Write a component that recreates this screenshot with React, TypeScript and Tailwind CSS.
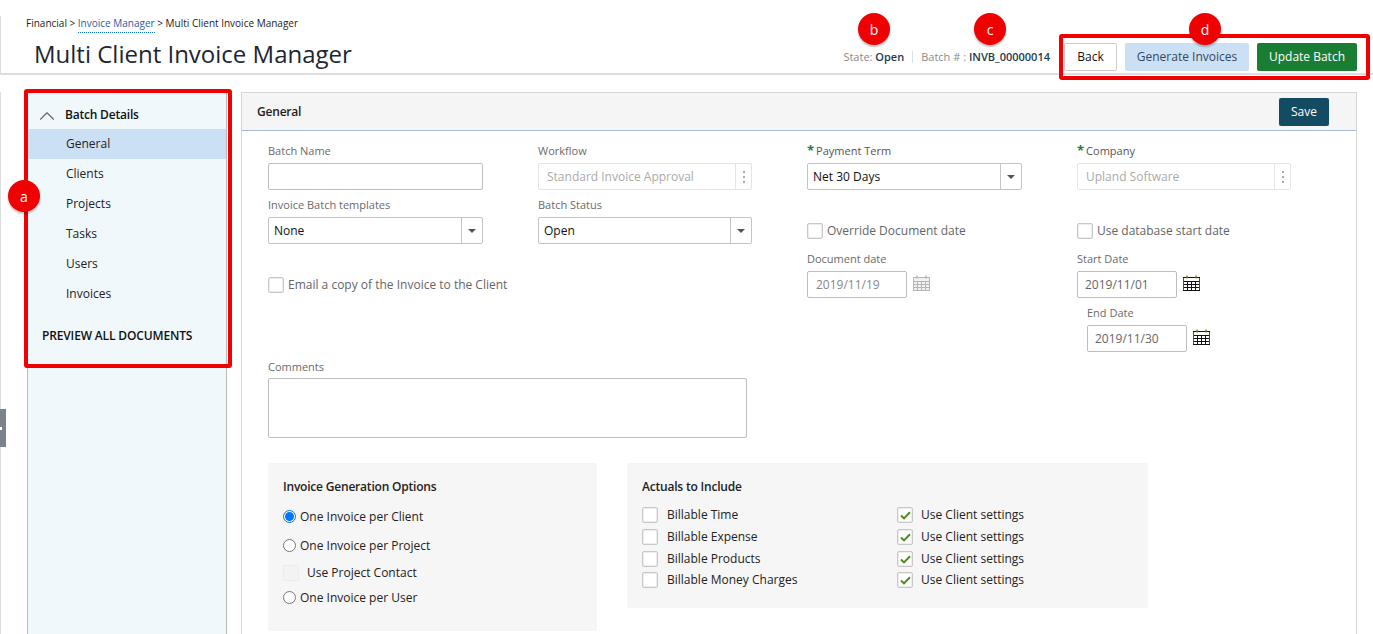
import { ChevronUp } from "lucide-react";
import type { ReactNode } from "react";

const NAV = ["General", "Clients", "Projects", "Tasks", "Users", "Invoices"];
const ACTUALS = ["Billable Time", "Billable Expense", "Billable Products", "Billable Money Charges"];
const ACTUAL_ROWS = ["h-[22px]", "h-[22px]", "h-[22px]", "h-[20px]"];

function Caret() {
  return <span className="h-0 w-0 border-x-[4px] border-t-[4px] border-x-transparent border-t-[#555]" />;
}

function Label({ children, required }: { children: ReactNode; required?: boolean }) {
  return (
    <div className={`flex h-[12px] items-center gap-[2px] text-[11px] leading-none ${required ? "font-medium text-[#555]" : "text-[#6b6b6b]"}`}>
      {required && <span className="text-[13px] font-bold text-[#1a7f37]">*</span>}
      {children}
    </div>
  );
}

function TextBox({ value, className = "" }: { value?: string; className?: string }) {
  return (
    <div className={`mt-[7px] flex h-[27px] items-center rounded-[2px] border border-[#bdbdbd] bg-white text-[#666] ${className}`}>
      {value}
    </div>
  );
}

function Select({ value }: { value: string }) {
  return (
    <div className="mt-[7px] flex h-[27px] w-full items-center rounded-[2px] border border-[#c4c4c4] bg-white text-[#111]">
      <span className="flex-1 pl-[5px]">{value}</span>
      <span className="flex h-full w-[21px] items-center justify-center border-l border-[#c4c4c4]">
        <Caret />
      </span>
    </div>
  );
}

function Lookup({ value }: { value: string }) {
  return (
    <div className="mt-[7px] flex h-[27px] w-full items-center rounded-[2px] border border-[#e4e4e4] bg-white text-[#aaa]">
      <span className="flex-1 pl-[8px]">{value}</span>
      <span className="flex h-full w-[16px] flex-col items-center justify-center gap-[3px] border-l border-[#e4e4e4]">
        <i className="h-[2px] w-[2px] bg-[#aaa]" />
        <i className="h-[2px] w-[2px] bg-[#aaa]" />
        <i className="h-[2px] w-[2px] bg-[#aaa]" />
      </span>
    </div>
  );
}

function Box({ checked, disabled }: { checked?: boolean; disabled?: boolean }) {
  return (
    <span
      className={`flex h-[16px] w-[16px] shrink-0 items-center justify-center rounded-[2px] border ${
        disabled ? "border-[#ececec] bg-[#f3f3f3]" : "border-[#c8c8c8] bg-white shadow-[inset_0_0_0_1px_#ededed]"
      } ${checked ? "bg-[#f3f3f3]" : ""}`}
    >
      {checked && (
        <svg width="11" height="9" viewBox="0 0 11 9">
          <path d="M1 4.6 4 7.4 10 1.2" fill="none" stroke="#4e8a1e" strokeWidth="2" />
        </svg>
      )}
    </span>
  );
}

function Radio({ checked }: { checked?: boolean }) {
  return (
    <span
      className={`-mt-px flex h-[13px] w-[13px] shrink-0 items-center justify-center rounded-full border bg-white ${
        checked ? "border-[#0075ff]" : "border-[#767676]"
      }`}
    >
      {checked && <i className="h-[9px] w-[9px] rounded-full bg-[#0075ff]" />}
    </span>
  );
}

function Calendar({ muted }: { muted?: boolean }) {
  const c = muted ? "#b5b5b5" : "#111";
  return (
    <svg width="17" height="16" viewBox="0 0 17 16" className="ml-[6px] mt-[11px] shrink-0">
      <rect x="0.5" y="2.5" width="16" height="13" fill={muted ? "#f2f2f2" : "#fff"} stroke={c} />
      <path d="M0.5 2.5h16" stroke={c} />
      <path d="M4 0.5v3M13 0.5v3" stroke={muted ? c : "#8a6a20"} strokeWidth="1.4" />
      <path d="M0.5 6.5h16M0.5 9.5h16M0.5 12.5h16M4.5 6.5v9M8.5 6.5v9M12.5 6.5v9" stroke={c} strokeWidth="1" />
      {!muted && <path d="M0.5 3v12" stroke="#b5741f" strokeWidth="0.6" />}
      {!muted && <path d="M16.5 3v12" stroke="#2f7fd0" strokeWidth="0.6" />}
    </svg>
  );
}

function Badge({ letter, className }: { letter: string; className: string }) {
  return (
    <span
      className={`absolute flex h-[32px] w-[32px] items-center justify-center rounded-full bg-[#f00000] text-[14px] text-white shadow-[0_2px_2px_rgba(0,0,0,0.25)] ${className}`}
    >
      {letter}
    </span>
  );
}

export default function App() {
  return (
    <div className="relative h-[634px] w-[1373px] overflow-hidden bg-white font-['Open_Sans',sans-serif] text-[12px] text-[#333]">
      <header className="mt-[16px] flex h-[59px] items-start justify-between border-b-2 border-l border-[#dedede] pr-[16px]">
        <div>
          <div className="ml-[25px] text-[10px] leading-[14px] text-[#222]">
            Financial &gt;{" "}
            <span className="border-b border-dotted border-[#0a6ecb] pb-[2px] text-[#2c5d9e]">Invoice Manager</span> &gt; Multi Client
            Invoice Manager
          </div>
          <h1 className="ml-[33px] mt-[7px] text-[24px] leading-[34px] text-[#1c2733]">Multi Client Invoice Manager</h1>
        </div>
        <div className="mt-[27px] flex items-center">
          <div className="flex items-center text-[11px] text-[#8a8a8a]">
            State:&nbsp;<b className="font-semibold text-[#1d3a4d]">Open</b>
            <i className="mx-[8px] h-[12px] w-px bg-[#d8e2ea]" />
            Batch # :&nbsp;<b className="font-semibold text-[#1d3a4d]">INVB_00000014</b>
          </div>
          <button className="ml-[14px] h-[28px] w-[53px] rounded-[2px] border border-[#ccc] bg-white text-[#111]">Back</button>
          <button className="ml-[8px] h-[28px] w-[124px] rounded-[2px] bg-[#cce0f5] text-[#34495e]">Generate Invoices</button>
          <button className="ml-[8px] h-[28px] w-[100px] rounded-[2px] bg-[#1a7d34] text-white">Update Batch</button>
        </div>
      </header>

      <div className="mt-[17px] flex h-[542px] items-stretch border-l border-[#dedede]">
        <aside className="ml-[26px] w-[200px] border-x border-[#bcbcbc] bg-[#f0f8fc] pt-[8px]">
          <div className="flex h-[29px] items-center text-[#111]">
            <ChevronUp className="ml-[6px] mt-[2px] text-[#666]" size={26} strokeWidth={1} />
            <span className="ml-[5px] font-semibold tracking-[-0.2px]">Batch Details</span>
          </div>
          {NAV.map((n, i) => (
            <div key={n} className={`flex h-[30px] items-center pl-[38px] text-[#222] ${i === 0 ? "bg-[#cce0f5]" : ""}`}>
              {n}
            </div>
          ))}
          <div className="ml-[14px] mt-[18px] font-semibold tracking-[-0.15px] text-[#111]">PREVIEW ALL DOCUMENTS</div>
        </aside>

        <main className="ml-[14px] h-full w-[1116px] border border-b-0 border-[#d6d6d6]">
          <div className="flex h-[38px] items-center justify-between border-b border-[#a9bcd5] bg-[#f5f5f5] pl-[15px] pr-[27px]">
            <span className="font-semibold tracking-[-0.2px] text-[#222]">General</span>
            <button className="h-[28px] w-[50px] rounded-[2px] bg-[#134b63] text-white">Save</button>
          </div>

          <div className="pl-[26px] pt-[13px]">
            <div className="grid grid-cols-[270px_269px_270px_216px] grid-rows-[54px_54px_54px_54px]">
              <div className="w-[215px]">
                <Label>Batch Name</Label>
                <TextBox />
              </div>
              <div className="w-[214px]">
                <Label>Workflow</Label>
                <Lookup value="Standard Invoice Approval" />
              </div>
              <div className="w-[215px]">
                <Label required>Payment Term</Label>
                <Select value="Net 30 Days" />
              </div>
              <div className="w-[214px]">
                <Label required>Company</Label>
                <Lookup value="Upland Software" />
              </div>

              <div className="w-[215px]">
                <Label>Invoice Batch templates</Label>
                <Select value="None" />
              </div>
              <div className="w-[214px]">
                <Label>Batch Status</Label>
                <Select value="Open" />
              </div>
              <div className="mt-[25px] flex h-[16px] items-center gap-[4px] text-[#666]">
                <Box />
                Override Document date
              </div>
              <div className="mt-[25px] flex h-[16px] items-center gap-[4px] text-[#666]">
                <Box />
                Use database start date
              </div>

              <div className="col-span-2 mt-[25px] flex h-[16px] items-center gap-[4px] text-[#666]">
                <Box />
                Email a copy of the Invoice to the Client
              </div>
              <div>
                <Label>Document date</Label>
                <div className="flex items-start">
                  <TextBox value="2019/11/19" className="w-[100px] px-[8px] text-[#888]" />
                  <Calendar muted />
                </div>
              </div>
              <div>
                <Label>Start Date</Label>
                <div className="flex items-start">
                  <TextBox value="2019/11/01" className="w-[100px] px-[7px]" />
                  <Calendar />
                </div>
              </div>

              <div className="col-start-4 ml-[10px]">
                <Label>End Date</Label>
                <div className="flex items-start">
                  <TextBox value="2019/11/30" className="w-[100px] px-[7px]" />
                  <Calendar />
                </div>
              </div>
            </div>

            <Label>Comments</Label>
            <div className="mt-[6px] h-[60px] w-[479px] rounded-[2px] border border-[#bdbdbd] bg-white" />

            <div className="mt-[25px] flex items-start">
              <section className="h-[168px] w-[329px] rounded-[2px] bg-[#f6f6f6] pl-[15px] pt-[16px] text-[#222]">
                <h3 className="font-semibold leading-[16px] tracking-[-0.2px]">Invoice Generation Options</h3>
                <div className="mt-[14px] flex h-[16px] items-center gap-[4px]">
                  <Radio checked />
                  One Invoice per Client
                </div>
                <div className="mt-[13px] flex h-[16px] items-center gap-[4px]">
                  <Radio />
                  One Invoice per Project
                </div>
                <div className="mt-[11px] flex h-[16px] items-center gap-[8px]">
                  <Box disabled />
                  Use Project Contact
                </div>
                <div className="mt-[9px] flex h-[16px] items-center gap-[4px]">
                  <Radio />
                  One Invoice per User
                </div>
              </section>

              <section className="ml-[30px] h-[145px] w-[521px] rounded-[2px] bg-[#f6f6f6] pl-[15px] pt-[16px] text-[#222]">
                <h3 className="font-semibold leading-[16px] tracking-[-0.2px]">Actuals to Include</h3>
                <div className="mt-[9px]">
                  {ACTUALS.map((a, i) => (
                    <div key={a} className={`flex items-center ${ACTUAL_ROWS[i]}`}>
                      <div className="flex w-[255px] items-center gap-[9px]">
                        <Box />
                        {a}
                      </div>
                      <div className="flex items-center gap-[8px]">
                        <Box checked />
                        Use Client settings
                      </div>
                    </div>
                  ))}
                </div>
              </section>
            </div>
          </div>
        </main>
      </div>

      {/* collapse handle */}
      <div className="absolute left-0 top-[409px] flex h-[38px] w-[6px] items-center bg-[#7d838b]">
        <i className="h-[3px] w-[2px] bg-white" />
      </div>

      {/* callouts */}
      <div className="absolute left-[24px] top-[89px] h-[279px] w-[208px] rounded-[3px] border-[4px] border-[#f00000]" />
      <div className="absolute left-[1059px] top-[34px] h-[46px] w-[311px] rounded-[3px] border-[4px] border-[#f00000]" />
      <Badge letter="a" className="left-[8px] top-[180px]" />
      <Badge letter="b" className="left-[858px] top-[13px]" />
      <Badge letter="c" className="left-[974px] top-[13px]" />
      <Badge letter="d" className="left-[1189px] top-[13px]" />
    </div>
  );
}
